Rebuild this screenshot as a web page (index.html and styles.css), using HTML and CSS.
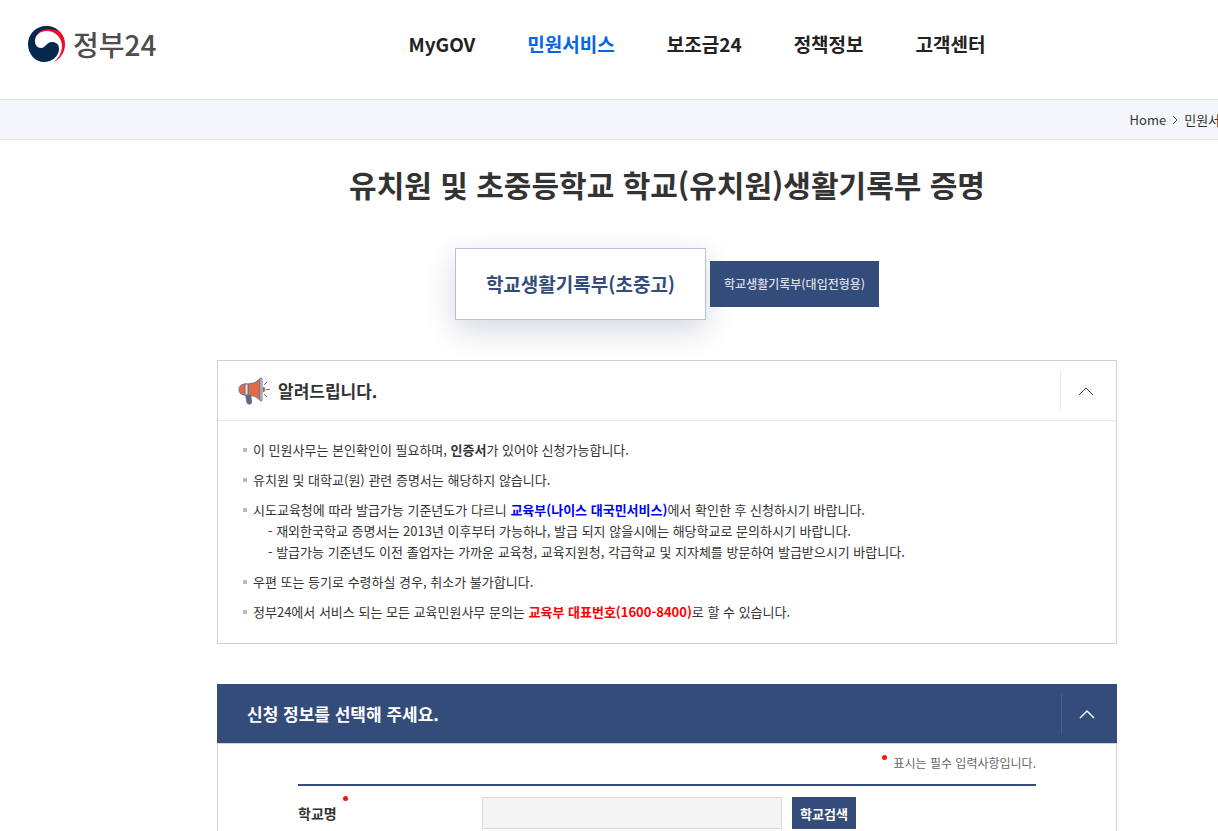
FILE: index.html
```html
<!DOCTYPE html>
<html lang="ko">
<head>
    <meta charset="UTF-8">
    <meta name="viewport" content="width=device-width, initial-scale=1.0">
    <title>정부24</title>
    <link rel="stylesheet" href="styles.css">
</head>
<body>
    <div class="page">
        <!-- Header -->
        <header class="header">
            <a href="#" class="logo">
                <svg class="logo-mark" viewBox="0 0 37 36" aria-hidden="true">
                    <path fill="#e60f2d" d="M5 9 C9 3 16 0 22 1 C31 2 37 9 37 18 C37 26 33 32 26 36 C32 31 34 25 34 19 C33 11 27 5 19 5 C14 5 10 7 8 11 Z"/>
                    <path fill="#06284f" d="M31 5 C28 2 24 0 18 0 C8 0 0 8 0 18 C0 28 7 36 16 36 C24 36 31 30 31 23 C31 18 28 16 24 16 C18 16 18 22 13 22 C9 22 7 19 7 15 C7 7 14 3 20 3 C24 3 28 4 31 5 Z"/>
                </svg>
                <span class="logo-text">정부24</span>
            </a>
            <nav class="nav">
                <a href="#">MyGOV</a>
                <a href="#" class="active">민원서비스</a>
                <a href="#">보조금24</a>
                <a href="#">정책정보</a>
                <a href="#">고객센터</a>
            </nav>
        </header>

        <!-- Breadcrumb -->
        <div class="breadcrumb">
            <a href="#">Home</a>
            <svg class="crumb-arrow" viewBox="0 0 6 10" aria-hidden="true"><path d="M1 1l4 4-4 4"/></svg>
            <a href="#">민원서비스</a>
        </div>

        <main class="content">
            <h1 class="title">유치원 및 초중등학교 학교(유치원)생활기록부 증명</h1>

            <!-- Tabs -->
            <div class="tabs">
                <button type="button" class="tab tab-on">학교생활기록부(초중고)</button>
                <button type="button" class="tab">학교생활기록부(대입전형용)</button>
            </div>

            <!-- Notice -->
            <section class="panel notice">
                <div class="panel-head">
                    <svg class="horn" viewBox="0 0 32 28" aria-hidden="true">
                        <path fill="#5f6b7e" d="M7 17h6l1 8q0 2-2 2.500h-1q-2 0-2.500-2z"/>
                        <path fill="#e2694a" stroke="#6c6f85" d="M6 7h3v11H6q-5-1-5-5.500T6 7z"/>
                        <path fill="#e2694a" stroke="#6c6f85" d="M10 7q7 0 12-5v21q-5-5-12-5z"/>
                        <path fill="#e4e6ee" stroke="#6c6f85" d="M7 7h3v11H7zM22 1.500q1-1 2 0v22q-1 1-2 0z"/>
                        <path fill="#d9553c" stroke="#6c6f85" stroke-width=".5" d="M25 10q2 0 2 2.500T25 15z"/>
                        <path fill="none" stroke="#6c6f85" d="M26 8l3-3M28 12.500h4M26 17l3 3"/>
                    </svg>
                    <h2>알려드립니다.</h2>
                    <button type="button" class="toggle" aria-label="접기">
                        <svg viewBox="0 0 16 10"><path d="M1 9l7-7 7 7"/></svg>
                    </button>
                </div>
                <ul class="notice-list">
                    <li>이 민원사무는 본인확인이 필요하며, <strong>인증서</strong>가 있어야 신청가능합니다.</li>
                    <li>유치원 및 대학교(원) 관련 증명서는 해당하지 않습니다.</li>
                    <li>시도교육청에 따라 발급가능 기준년도가 다르니 <a href="#" class="neis">교육부(나이스 대국민서비스)</a>에서 확인한 후 신청하시기 바랍니다.
                        <p>- 재외한국학교 증명서는 2013년 이후부터 가능하나, 발급 되지 않을시에는 해당학교로 문의하시기 바랍니다.</p>
                        <p>- 발급가능 기준년도 이전 졸업자는 가까운 교육청, 교육지원청, 각급학교 및 지자체를 방문하여 발급받으시기 바랍니다.</p>
                    </li>
                    <li>우편 또는 등기로 수령하실 경우, 취소가 불가합니다.</li>
                    <li>정부24에서 서비스 되는 모든 교육민원사무 문의는 <strong class="tel">교육부 대표번호(1600-8400)</strong>로 할 수 있습니다.</li>
                </ul>
            </section>

            <!-- Application form -->
            <section class="panel apply">
                <div class="panel-head">
                    <h2>신청 정보를 선택해 주세요.</h2>
                    <button type="button" class="toggle" aria-label="접기">
                        <svg viewBox="0 0 16 10"><path d="M1 9l7-7 7 7"/></svg>
                    </button>
                </div>
                <form class="apply-body">
                    <p class="required-note"><span class="dot"></span>표시는 필수 입력사항입니다.</p>
                    <div class="field">
                        <label for="school">학교명<span class="dot"></span></label>
                        <input type="text" id="school" readonly>
                        <button type="button" class="search">학교검색</button>
                    </div>
                </form>
            </section>
        </main>
    </div>
</body>
</html>
```

FILE: styles.css
```css
/* Reset */
* {
    box-sizing: border-box;
}

body, h1, h2, p, ul {
    margin: 0;
    padding: 0;
}

html {
    overflow: hidden;
}

body {
    font-family: "Noto Sans CJK KR", sans-serif;
    font-size: 13px;
    line-height: 21px;
    color: #333;
    background: #fff;
}

a {
    color: inherit;
    text-decoration: none;
}

button, input {
    font-family: inherit;
    padding: 0;
    border: none;
    border-radius: 0;
}

button {
    cursor: pointer;
}

.page {
    min-width: 1334px;
}

/* Header */
.header {
    display: flex;
    align-items: center;
    gap: 252px;
    height: 99px;
    padding: 0 28px 12px;
}

.logo {
    display: flex;
    align-items: center;
    gap: 8px;
}

.logo-mark {
    width: 37px;
    height: 36px;
}

.logo-text {
    font-size: 28px;
    font-weight: 500;
    line-height: 36px;
    color: #4d4d4d;
}

.nav {
    display: flex;
    gap: 52px;
    font-size: 19px;
    font-weight: 700;
    line-height: 28px;
    color: #222;
}

.nav .active {
    color: #0366e6;
}

/* Breadcrumb */
.breadcrumb {
    display: flex;
    justify-content: flex-end;
    align-items: center;
    gap: 6px;
    height: 41px;
    padding-right: 90px;
    border-top: 1px solid #e1e2e8;
    border-bottom: 1px solid #e4e5e9;
    background: #f5f6fa;
}

.crumb-arrow {
    width: 6px;
    height: 10px;
    fill: none;
    stroke: #444;
}

/* Content */
.content {
    width: 900px;
    margin: 0 auto;
}

.title {
    padding-top: 20px;
    font-size: 30px;
    font-weight: 700;
    line-height: 48px;
    text-align: center;
}

/* Tabs */
.tabs {
    display: flex;
    justify-content: center;
    align-items: center;
    gap: 4px;
    margin: 40px 0;
}

.tab {
    padding: 0 14px;
    font-size: 12px;
    font-weight: 500;
    line-height: 46px;
    color: #dcdfe6;
    background: #344c7a;
}

.tab-on {
    padding: 0 30px;
    border: 1px solid #b5bfdb;
    font-size: 19px;
    line-height: 70px;
    font-weight: 700;
    color: #344c7a;
    background: #fff;
    box-shadow: 0 10px 30px rgba(52, 60, 100, 0.2);
}

/* Panels */
.panel {
    margin-bottom: 40px;
    border: 1px solid #d0d0d0;
}

.panel-head {
    display: flex;
    align-items: center;
    height: 60px;
    padding-left: 20px;
    border-bottom: 1px solid #e8e8e8;
}

.panel-head h2 {
    font-size: 17px;
    font-weight: 700;
    line-height: 26px;
}

.horn {
    width: 32px;
    height: 28px;
    margin-right: 8px;
}

.toggle {
    width: 56px;
    height: 40px;
    margin-left: auto;
    padding-right: 5px;
    border-left: 1px solid #e8e8e8;
    background: none;
}

.toggle svg {
    width: 16px;
    height: 10px;
    fill: none;
    stroke: #444;
}

/* Notice */
.notice-list {
    display: flex;
    flex-direction: column;
    gap: 9px;
    padding: 18px 24px 21px;
    list-style: none;
}

.notice-list li {
    padding-left: 11px;
    background: linear-gradient(#bbb, #bbb) no-repeat 1px 9px / 4px 4px;
}

.notice-list p {
    padding-left: 15px;
}

.neis {
    font-weight: 700;
    color: #00f;
}

.tel {
    color: #f00;
}

/* Application form */
.apply .panel-head {
    height: 60px;
    margin: -1px -1px 0;
    padding-left: 30px;
    border-bottom-color: #cfd3dc;
    color: #fff;
    background: #344c7a;
}

.apply .toggle {
    border-left-color: #4b608b;
}

.apply .toggle svg {
    stroke: #fff;
    stroke-width: 1.5;
}

.apply-body {
    padding: 8px 80px 80px;
}

.dot {
    display: inline-block;
    width: 5px;
    height: 5px;
    margin-right: 6px;
    border-radius: 50%;
    vertical-align: 8px;
    background: #f51414;
}

.required-note {
    padding-bottom: 11px;
    border-bottom: 2px solid #344c7a;
    font-size: 12px;
    text-align: right;
    color: #666;
}

.field {
    display: flex;
    align-items: center;
    padding-top: 10px;
}

.field label {
    display: flex;
    align-items: center;
    gap: 6px;
    width: 184px;
    font-size: 14px;
    font-weight: 700;
}

.field .dot {
    margin-bottom: 29px;
}

.field input {
    width: 300px;
    height: 32px;
    border: 1px solid #dcdcdc;
    background: #f4f4f4;
}

.search {
    height: 32px;
    margin-left: 10px;
    padding: 0 8px;
    font-size: 13px;
    font-weight: 700;
    color: #fff;
    background: #344c7a;
}
```
